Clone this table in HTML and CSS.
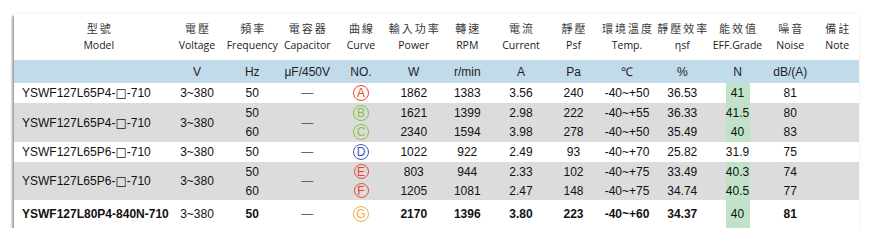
FILE: index.html
```html
<!DOCTYPE html>
<html>
<head>
<meta charset="utf-8">
<link rel="stylesheet" href="styles.css">
</head>
<body>
<div class="card">
<table class="spec">
<colgroup>
<col class="c-model"><col class="c-volt"><col class="c-freq"><col class="c-cap"><col class="c-curve"><col class="c-power"><col class="c-rpm"><col class="c-cur"><col class="c-psf"><col class="c-temp"><col class="c-eta"><col class="c-eff"><col class="c-noise"><col class="c-note">
</colgroup>
<thead>
<tr class="head">
<th class="th-model"><span class="zh">型號</span><span class="en">Model</span></th>
<th><span class="zh">電壓</span><span class="en">Voltage</span></th>
<th><span class="zh">頻率</span><span class="en">Frequency</span></th>
<th><span class="zh">電容器</span><span class="en">Capacitor</span></th>
<th><span class="zh">曲線</span><span class="en">Curve</span></th>
<th><span class="zh">輸入功率</span><span class="en">Power</span></th>
<th><span class="zh">轉速</span><span class="en">RPM</span></th>
<th><span class="zh">電流</span><span class="en">Current</span></th>
<th><span class="zh">靜壓</span><span class="en">Psf</span></th>
<th><span class="zh">環境溫度</span><span class="en">Temp.</span></th>
<th><span class="zh">靜壓效率</span><span class="en">ηsf</span></th>
<th><span class="zh">能效值</span><span class="en">EFF.Grade</span></th>
<th><span class="zh">噪音</span><span class="en">Noise</span></th>
<th><span class="zh">備註</span><span class="en">Note</span></th>
</tr>
<tr class="units">
<td></td><td>V</td><td>Hz</td><td>μF/450V</td><td>NO.</td><td>W</td><td>r/min</td><td>A</td><td>Pa</td><td>℃</td><td>%</td><td>N</td><td>dB/(A)</td><td></td>
</tr>
</thead>
<tbody>
<tr class="r1">
<td class="model">YSWF127L65P4-<span class="sq">□</span>-710</td><td>3~380</td><td>50</td><td class="dash">—</td>
<td><span class="circ red">A</span></td><td>1862</td><td>1383</td><td>3.56</td><td>240</td><td>-40~+50</td><td>36.53</td><td class="hi">41</td><td>81</td><td></td>
</tr>
<tr class="grey sub top">
<td class="model" rowspan="2">YSWF127L65P4-<span class="sq">□</span>-710</td><td rowspan="2">3~380</td><td>50</td><td class="dash" rowspan="2">—</td>
<td><span class="circ green">B</span></td><td>1621</td><td>1399</td><td>2.98</td><td>222</td><td>-40~+55</td><td>36.33</td><td class="hi">41.5</td><td>80</td><td rowspan="2"></td>
</tr>
<tr class="grey sub bot">
<td>60</td>
<td><span class="circ green">C</span></td><td>2340</td><td>1594</td><td>3.98</td><td>278</td><td>-40~+50</td><td>35.49</td><td class="hi">40</td><td>83</td>
</tr>
<tr class="r1">
<td class="model">YSWF127L65P6-<span class="sq">□</span>-710</td><td>3~380</td><td>50</td><td class="dash">—</td>
<td><span class="circ blue">D</span></td><td>1022</td><td>922</td><td>2.49</td><td>93</td><td>-40~+70</td><td>25.82</td><td>31.9</td><td>75</td><td></td>
</tr>
<tr class="grey sub top2">
<td class="model" rowspan="2">YSWF127L65P6-<span class="sq">□</span>-710</td><td rowspan="2">3~380</td><td>50</td><td class="dash" rowspan="2">—</td>
<td><span class="circ red bold">E</span></td><td>803</td><td>944</td><td>2.33</td><td>102</td><td>-40~+75</td><td>33.49</td><td class="hi">40.3</td><td>74</td><td rowspan="2"></td>
</tr>
<tr class="grey sub bot2">
<td>60</td>
<td><span class="circ red bold">F</span></td><td>1205</td><td>1081</td><td>2.47</td><td>148</td><td>-40~+75</td><td>34.74</td><td class="hi">40.5</td><td>77</td>
</tr>
<tr class="last">
<td class="model">YSWF127L80P4-840N-710</td><td class="plain">3~380</td><td>50</td><td class="dash">—</td>
<td><span class="circ orange">G</span></td><td>2170</td><td>1396</td><td>3.80</td><td>223</td><td>-40~+60</td><td>34.37</td><td class="hi plain">40</td><td>81</td><td></td>
</tr>
</tbody>
</table>
</div>
</body>
</html>
```

FILE: styles.css
```css
html, body {
  margin: 0;
  padding: 0;
  background: #ffffff;
}
body {
  padding: 14px 0 0 14px;
  font-family: "Liberation Sans", Arial, sans-serif;
  color: #111;
}
.card {
  width: 845px;
  background: #fff;
  box-shadow: -2px 2px 2px rgba(0,0,0,0.35), 0 0 3px rgba(0,0,0,0.10);
}
.spec {
  width: 845px;
  table-layout: fixed;
  border-collapse: collapse;
  border-spacing: 0;
}
.c-model { width: 155.5px; }
.c-volt { width: 55px; }
.c-freq { width: 55.5px; }
.c-cap { width: 54.5px; }
.c-curve { width: 53px; }
.c-power { width: 52.5px; }
.c-rpm { width: 54.5px; }
.c-cur { width: 53px; }
.c-psf { width: 52px; }
.c-temp { width: 55px; }
.c-eta { width: 55.5px; }
.c-eff { width: 55px; }
.c-noise { width: 50.5px; }
.c-note { width: 43.5px; }

.spec th, .spec td {
  padding: 0;
  text-align: center;
  vertical-align: middle;
  white-space: nowrap;
  font-size: 12px;
  line-height: 14px;
}
.head th {
  height: 46px;
  font-weight: normal;
  color: #333;
}
.head th.th-model { padding-left: 14px; }
.zh {
  display: block;
  font-family: "Noto Sans CJK TC", sans-serif;
  font-size: 11px;
  line-height: 17px;
  letter-spacing: 2px;
  margin-right: -2px;
  color: #3a3a3a;
}
.en {
  display: block;
  font-family: "Open Sans", sans-serif;
  font-size: 10.5px;
  line-height: 17px;
  color: #222;
}
.units td {
  height: 23px;
  background: #c2dbeb;
  color: #222;
}
.r1 td { height: 20px; }
.grey td { background: #dcdcdc; }
.sub.top td, .sub.bot td { height: 19.5px; }
.sub.top2 td, .sub.bot2 td { height: 19px; }
.last td { height: 28px; font-weight: bold; }
.last td.plain { font-weight: normal; }
.spec td.model {
  text-align: left;
  padding-left: 8px;
}
.sq {
  font-family: "DejaVu Sans", sans-serif;
  font-size: 12px;
  font-weight: normal;
}
.spec td.dash {
  color: #666;
  font-weight: normal;
}
.spec td.hi {
  background-image: linear-gradient(#bfe2c9, #bfe2c9);
  background-size: 24px 100%;
  background-position: center;
  background-repeat: no-repeat;
}
.circ {
  display: inline-flex;
  align-items: center;
  justify-content: center;
  width: 14px;
  height: 14px;
  border: 1px solid currentColor;
  border-radius: 50%;
  font-size: 12px;
  line-height: 14px;
  font-weight: normal;
  vertical-align: middle;
}
.circ.red { color: #e8462a; }
.circ.green { color: #86c440; }
.circ.blue { color: #3b55c0; }
.circ.orange { color: #f5ab3a; }
.circ.bold { border-width: 1.5px; width: 13px; height: 13px; }
```
